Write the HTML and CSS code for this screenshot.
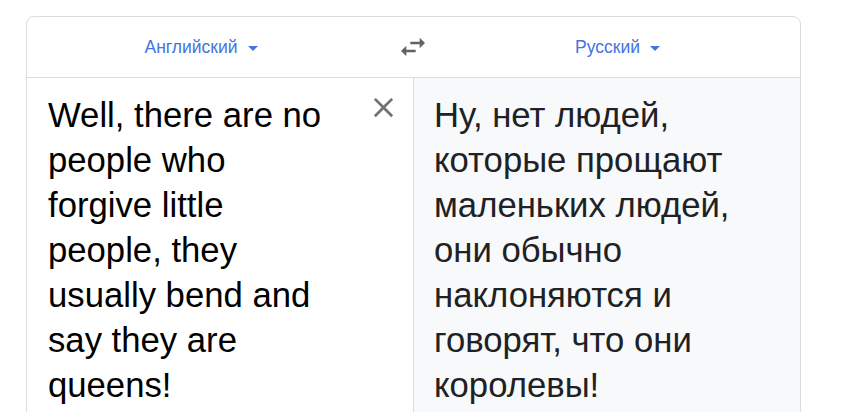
FILE: index.html
```html
<!DOCTYPE html>
<html lang="ru">
<head>
<meta charset="utf-8">
<title>Переводчик</title>
<link rel="stylesheet" href="styles.css">
</head>
<body>
<div class="card">
  <div class="lang-bar">
    <div class="lang lang-src">
      <span class="lang-name">Английский</span><span class="caret"></span>
    </div>
    <div class="swap">
      <svg width="32" height="32" viewBox="0 0 24 24"><path fill="currentColor" d="M6.99 11L3 15l3.99 4v-3H14v-2H6.99v-3zM21 9l-3.99-4v3H10v2h7.01v3L21 9z"/></svg>
    </div>
    <div class="lang lang-dst">
      <span class="lang-name">Русский</span><span class="caret"></span>
    </div>
  </div>
  <div class="panels">
    <div class="panel panel-src">
      <div class="text text-src">Well, there are no<br>people who<br>forgive little<br>people, they<br>usually bend and<br>say they are<br>queens!</div>
      <div class="clear">
        <svg width="33" height="33" viewBox="0 0 24 24"><path fill="currentColor" d="M19 6.41L17.59 5 12 10.59 6.41 5 5 6.41 10.59 12 5 17.59 6.41 19 12 13.41 17.59 19 19 17.59 13.41 12z"/></svg>
      </div>
    </div>
    <div class="panel panel-dst">
      <div class="text text-dst">Ну, нет людей, которые прощают маленьких людей, они обычно наклоняются и говорят, что они королевы!</div>
    </div>
  </div>
</div>
</body>
</html>
```

FILE: styles.css
```css
* { box-sizing: border-box; }
html, body { margin: 0; padding: 0; background: #fff; }
body { font-family: "Liberation Sans", Arial, sans-serif; }

.card {
  margin: 16px 0 0 26px;
  width: 775px;
  border: 1px solid #dadce0;
  border-radius: 8px;
  overflow: hidden;
  background: #fff;
}

.lang-bar {
  display: grid;
  grid-template-columns: 348px 76px 1fr;
  height: 61px;
  border-bottom: 1px solid #dadce0;
  align-items: center;
}
.lang {
  display: flex;
  align-items: center;
  justify-content: center;
  color: #4374e0;
  font-size: 17.5px;
  padding-top: 1px;
}
.lang-dst { padding-right: 16px; }
.lang-name { margin-right: 10px; }
.caret {
  width: 0;
  height: 0;
  border-left: 5px solid transparent;
  border-right: 5px solid transparent;
  border-top: 5px solid #4374e0;
  margin-top: 2px;
}
.swap {
  display: flex;
  justify-content: center;
  align-items: center;
  color: #5f6368;
}
.swap svg { display: block; }

.panels {
  display: flex;
  min-height: 340px;
}
.panel {
  font-size: 34.7px;
  line-height: 45px;
}
.panel-src {
  width: 387px;
  border-right: 1px solid #dadce0;
  display: flex;
  padding: 15px 13px 0 21px;
  color: #000;
}
.text-src { flex: 1; white-space: nowrap; }
.clear {
  color: #6f7378;
  margin-top: -2px;
}
.clear svg { display: block; }
.panel-dst {
  flex: 1;
  background: #f8f9fa;
  padding: 15px 50px 0 20px;
  color: #202124;
}
```
